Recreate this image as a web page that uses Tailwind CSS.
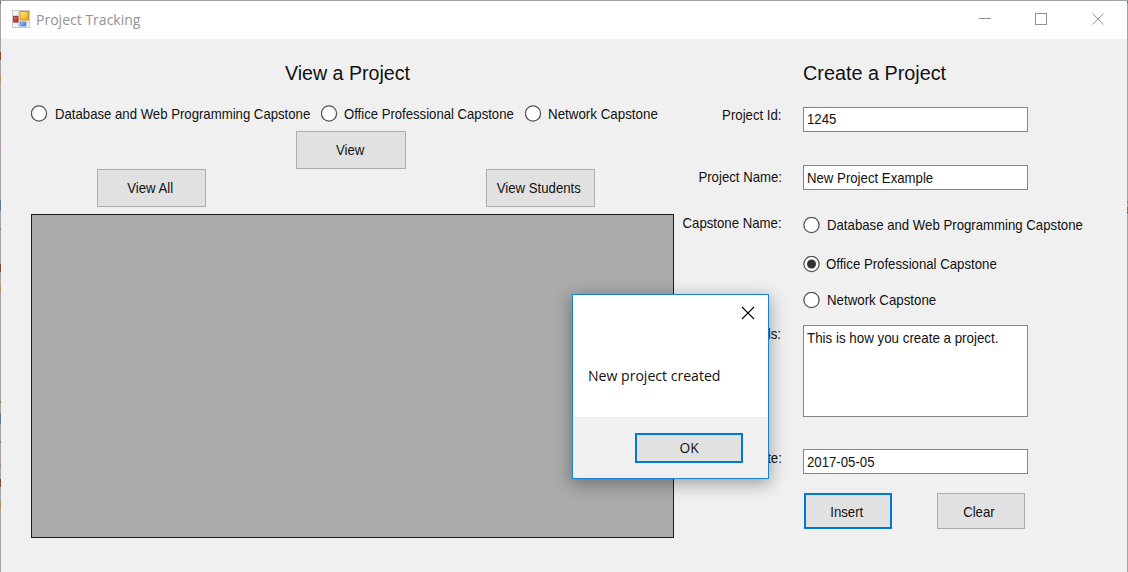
<!DOCTYPE html>
<html lang="en">
<head>
<meta charset="utf-8">
<title>Project Tracking</title>
<script src="https://cdn.jsdelivr.net/npm/@tailwindcss/browser@4"></script>
</head>
<body class="w-[1128px] h-[572px] overflow-hidden bg-[#a3a3a3] font-['Liberation_Sans',sans-serif] text-[15px] leading-[18px] text-[#111]">
<div class="relative flex w-full h-full pt-px">
  <!-- window edge, desktop showing through -->
  <div class="flex flex-col w-px h-full bg-[#a6a6a6]">
    <div class="h-[3px] mt-0 bg-[#4a7896]"></div>
    <div class="h-px mt-[27px] bg-[#c49a4a]"></div>
    <div class="h-px mt-1.5 bg-[#b08a4a]"></div>
    <div class="h-2 mt-[13px] bg-[#7d4a35]"></div>
    <div class="h-2 mt-3.5 bg-[#b8905c]"></div>
    <div class="h-px mt-[55px] bg-[#b078b8]"></div>
    <div class="h-px mt-1.5 bg-[#b078b8]"></div>
    <div class="h-0.5 mt-[43px] bg-[#a89a4a]"></div>
    <div class="h-[11px] mt-2.5 bg-[#5a7890]"></div>
    <div class="h-0.5 mt-[17px] bg-[#80808c]"></div>
    <div class="h-px mt-5 bg-[#b8905c]"></div>
    <div class="h-2 mt-[13px] bg-[#7d4a35]"></div>
    <div class="h-2 mt-3.5 bg-[#b8905c]"></div>
    <div class="h-0.5 mt-[107px] bg-[#8a8a3c]"></div>
    <div class="h-[11px] mt-2.5 bg-[#5a7890]"></div>
    <div class="h-0.5 mt-[17px] bg-[#80808c]"></div>
    <div class="h-px mt-[15px] bg-[#b8905c]"></div>
    <div class="h-px mt-1.5 bg-[#7d6a55]"></div>
    <div class="h-2 mt-[13px] bg-[#7d4a35]"></div>
    <div class="h-2 mt-3.5 bg-[#b8905c]"></div>
  </div>

  <div class="flex flex-col w-[1126px] h-full bg-[#f0f0f0]">
    <header class="flex items-center h-[38px] bg-white pl-[11px] shrink-0">
      <svg class="w-[18px] h-[18px] -mt-0.5 shrink-0" viewBox="0 0 18 18">
        <defs>
          <linearGradient id="y" x1="0" y1="0" x2="1" y2="1"><stop offset="0" stop-color="#ffe88a"/><stop offset="1" stop-color="#eba800"/></linearGradient>
          <linearGradient id="r" x1="0" y1="0" x2="1" y2="1"><stop offset="0" stop-color="#e88080"/><stop offset="1" stop-color="#a80c10"/></linearGradient>
          <linearGradient id="b" x1="0" y1="0" x2="1" y2="1"><stop offset="0" stop-color="#a8ccff"/><stop offset="1" stop-color="#2f6ad0"/></linearGradient>
        </defs>
        <rect x=".5" y=".5" width="17" height="17" fill="#f4f4f4" stroke="#c9c9c9"/>
        <path d="M6.500 1v16M1 5.500h6M1 12.500h16" stroke="#d4d4d4" fill="none"/>
        <rect x="8" y="1.500" width="8.500" height="8.500" fill="url(#y)" stroke="#c8981c"/>
        <rect x="1.500" y="6.500" width="4.500" height="5.500" fill="url(#r)" stroke="#a83c3c"/>
        <rect x="8" y="12" width="6" height="4" fill="url(#b)" stroke="#6a94d8"/>
      </svg>
      <h1 class="ml-1.5 w-[900px] -mt-[3px] font-['Open_Sans',sans-serif] text-[15px] leading-5 text-[#929292]"><span class="inline-block origin-left scale-x-[.935]">Project Tracking</span></h1>
      <svg class="ml-[42px] w-[130px] h-[14px] shrink-0" viewBox="0 0 130 14" fill="none" stroke="#929292" shape-rendering="crispEdges">
        <path d="M1 5.500h12"/>
        <rect x="57.500" y="0.500" width="11" height="11"/>
        <path shape-rendering="auto" d="M114.500 0.500l11 11M125.500 0.500l-11 11"/>
      </svg>
    </header>

    <main class="flex flex-1 pl-[30px]">
      <section class="w-[643px] shrink-0">
        <h2 class="mt-[21px] ml-[254px] h-[26px] text-[20px] leading-[26px]"><span class="inline-block origin-left scale-x-[.98]">View a Project</span></h2>
        <div class="flex h-[18px] mt-[18px]">
          <label class="flex items-center w-[290px] shrink-0"><svg class="w-[17px] h-[17px] mr-[7px] shrink-0" viewBox="0 0 17 17"><circle cx="8" cy="8.500" r="7.600" fill="#fff" stroke="#555" stroke-width="1.300"/></svg><span class="mt-0.5 origin-left scale-x-[.878] whitespace-nowrap">Database and Web Programming Capstone</span></label>
          <label class="flex items-center w-[204px] shrink-0"><svg class="w-[17px] h-[17px] mr-[6px] shrink-0" viewBox="0 0 17 17"><circle cx="8" cy="8.500" r="7.600" fill="#fff" stroke="#555" stroke-width="1.300"/></svg><span class="mt-0.5 origin-left scale-x-[.875] whitespace-nowrap">Office Professional Capstone</span></label>
          <label class="flex items-center w-[140px] shrink-0"><svg class="w-[17px] h-[17px] mr-[6px] shrink-0" viewBox="0 0 17 17"><circle cx="8" cy="8.500" r="7.600" fill="#fff" stroke="#555" stroke-width="1.300"/></svg><span class="mt-0.5 origin-left scale-x-[.89] whitespace-nowrap">Network Capstone</span></label>
        </div>
        <button class="block mt-[9px] ml-[265px] w-[110px] h-[38px] pr-[2px] border border-[#adadad] bg-[#e1e1e1]"><span class="inline-block scale-x-[.88]">View</span></button>
        <div class="flex">
          <button class="ml-[66px] w-[109px] h-[38px] pr-[3px] border border-[#adadad] bg-[#e1e1e1]"><span class="inline-block scale-x-[.88]">View All</span></button>
          <button class="ml-[280px] w-[109px] h-[38px] pr-[3px] border border-[#adadad] bg-[#e1e1e1]"><span class="inline-block scale-x-[.88] whitespace-nowrap">View Students</span></button>
        </div>
        <div class="mt-[7px] h-[324px] border border-[#1c1c1c] bg-[#ababab]"></div>
      </section>

      <section class="flex w-[452px]">
        <div class="flex flex-col w-[108px] items-end">
          <label class="mt-[67px] h-[18px] origin-right scale-x-[.88] whitespace-nowrap">Project Id:</label>
          <label class="mt-[44px] h-[18px] origin-right scale-x-[.88] whitespace-nowrap">Project Name:</label>
          <label class="mt-[28px] h-[18px] origin-right scale-x-[.88] whitespace-nowrap">Capstone Name:</label>
          <label class="mt-[93px] mr-px h-[18px] origin-right scale-x-[.88] whitespace-nowrap">Details:</label>
          <label class="mt-[106px] h-[18px] origin-right scale-x-[.88] whitespace-nowrap">Date:</label>
        </div>
        <div class="ml-[21px] w-[320px]">
          <h2 class="mt-[21px] h-[26px] text-[20px] leading-[26px]"><span class="inline-block origin-left scale-x-[.99]">Create a Project</span></h2>
          <div class="flex items-center mt-[21px] w-[225px] h-[25px] border border-[#868686] bg-white pl-[3px] pb-0.5"><span class="origin-left scale-x-[.88]">1245</span></div>
          <div class="flex items-center mt-[33px] w-[225px] h-[25px] border border-[#868686] bg-white pl-[3px]"><span class="origin-left scale-x-[.88]">New Project Example</span></div>
          <label class="flex items-center mt-[26px] h-[18px]"><svg class="w-[17px] h-[17px] mr-[7px] shrink-0" viewBox="0 0 17 17"><circle cx="8.500" cy="8" r="7.600" fill="#fff" stroke="#555" stroke-width="1.300"/></svg><span class="origin-left scale-x-[.88] whitespace-nowrap">Database and Web Programming Capstone</span></label>
          <label class="flex items-center mt-[21px] h-[18px]"><svg class="w-[17px] h-[17px] mr-[6px] shrink-0" viewBox="0 0 17 17"><circle cx="8.500" cy="8" r="7.600" fill="#fff" stroke="#555" stroke-width="1.300"/><circle cx="8.500" cy="8" r="4.500" fill="#333"/></svg><span class="origin-left scale-x-[.88] whitespace-nowrap">Office Professional Capstone</span></label>
          <label class="flex items-center mt-[18px] h-[18px]"><svg class="w-[17px] h-[17px] mr-[7px] shrink-0" viewBox="0 0 17 17"><circle cx="8.500" cy="8" r="7.600" fill="#fff" stroke="#555" stroke-width="1.300"/></svg><span class="origin-left scale-x-[.885] whitespace-nowrap">Network Capstone</span></label>
          <div class="mt-[16px] w-[225px] h-[92px] border border-[#868686] bg-white pl-[3px] pt-[3px]"><span class="inline-block origin-left scale-x-[.89] whitespace-nowrap">This is how you create a project.</span></div>
          <div class="flex items-center mt-[32px] w-[225px] h-[25px] border border-[#868686] bg-white pl-[3px]"><span class="origin-left scale-x-[.88]">2017-05-05</span></div>
          <div class="flex mt-[19px] ml-px">
            <button class="w-[88px] h-[36px] pr-[3px] pt-0.5 border-2 border-[#0078d7] bg-[#e1e1e1]"><span class="inline-block scale-x-[.88]">Insert</span></button>
            <button class="ml-[45px] w-[88px] h-[36px] pr-[4px] pt-0.5 border border-[#adadad] bg-[#e1e1e1]"><span class="inline-block scale-x-[.88]">Clear</span></button>
          </div>
        </div>
      </section>
    </main>
  </div>
  <div class="flex flex-col w-px h-full">
    <div class="h-0.5 bg-[#4a7896]"></div>
    <div class="h-0.5 mt-[198px] bg-[#8c6c50]"></div>
    <div class="h-1 mt-1 bg-[#8c6c50]"></div>
    <div class="h-px mt-px bg-[#303030]"></div>
  </div>

  <!-- message box over the form -->
  <div class="absolute left-[572px] top-[294px] flex flex-col w-[197px] h-[185px] border border-[#1883d7] bg-white shadow-[0_4px_16px_1px_rgba(0,0,0,0.34)]">
    <svg class="ml-[168px] mt-[11px] w-[14px] h-[14px]" viewBox="0 0 14 14" fill="none" stroke="#000" stroke-width="1.100"><path d="M1 1l12 12M13 1l-12 12"/></svg>
    <p class="mt-[46px] ml-[15px] h-5 font-['Open_Sans',sans-serif] text-[14.500px] leading-5 whitespace-nowrap"><span class="inline-block origin-left scale-x-[.97]">New project created</span></p>
    <div class="mt-auto h-[61px] bg-[#f0f0f0] pt-4 pl-[62px]">
      <button class="block w-[108px] h-[30px] border-2 border-[#0078d7] bg-[#e1e1e1] font-['Open_Sans',sans-serif] text-[14.500px]"><span class="inline-block scale-x-[.95]">OK</span></button>
    </div>
  </div>
</div>
</body>
</html>
